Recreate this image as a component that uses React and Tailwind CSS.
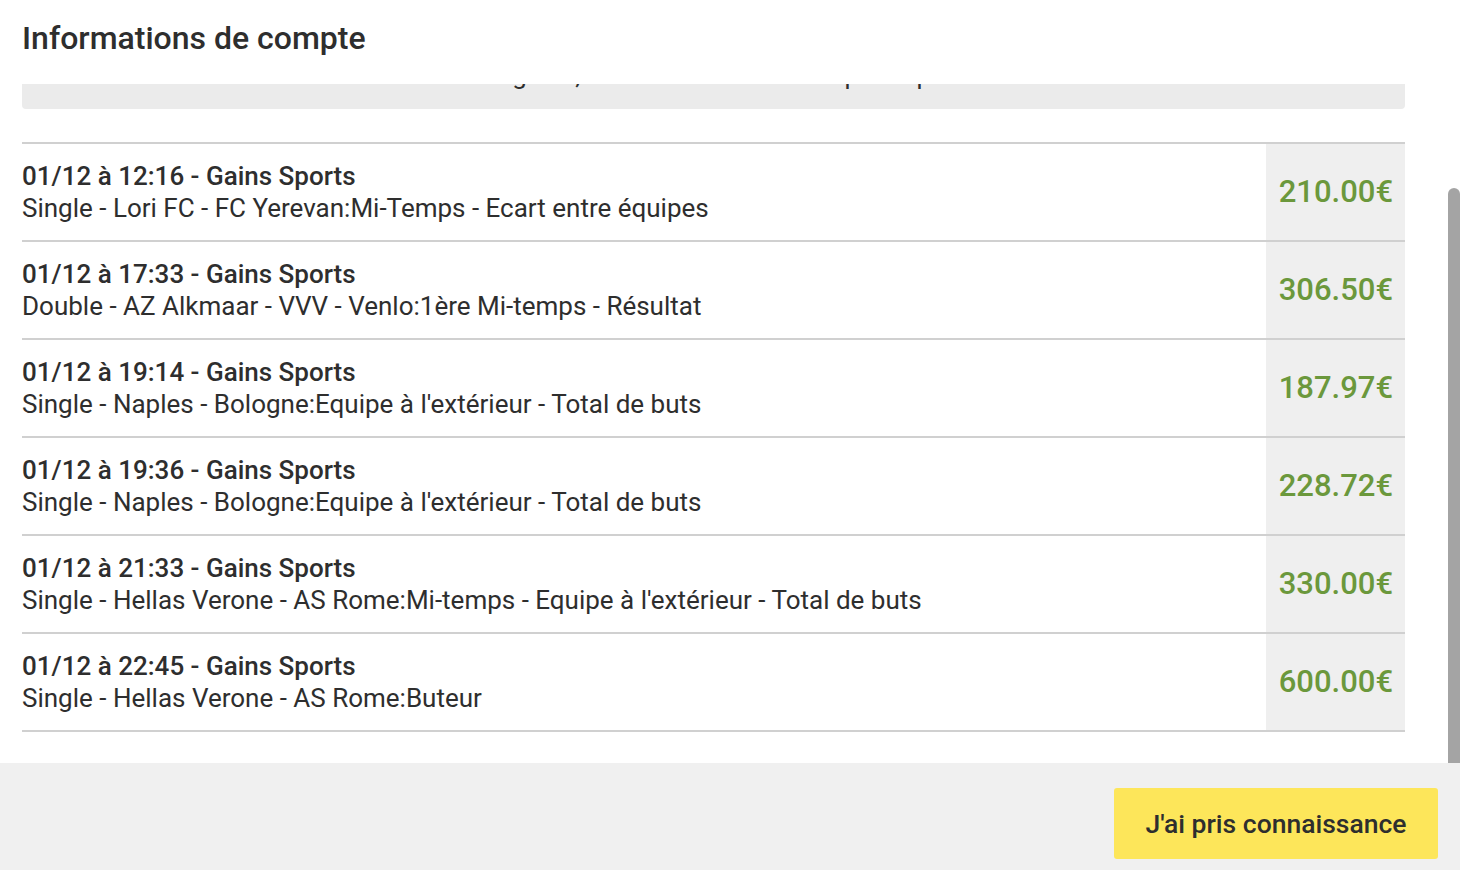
const rows = [
  { title: '01/12 à 12:16 - Gains Sports', detail: 'Single - Lori FC - FC Yerevan:Mi-Temps - Ecart entre équipes', amount: '210.00€' },
  { title: '01/12 à 17:33 - Gains Sports', detail: 'Double - AZ Alkmaar - VVV - Venlo:1ère Mi-temps - Résultat', amount: '306.50€' },
  { title: '01/12 à 19:14 - Gains Sports', detail: "Single - Naples - Bologne:Equipe à l'extérieur - Total de buts", amount: '187.97€' },
  { title: '01/12 à 19:36 - Gains Sports', detail: "Single - Naples - Bologne:Equipe à l'extérieur - Total de buts", amount: '228.72€' },
  { title: '01/12 à 21:33 - Gains Sports', detail: "Single - Hellas Verone - AS Rome:Mi-temps - Equipe à l'extérieur - Total de buts", amount: '330.00€' },
  { title: '01/12 à 22:45 - Gains Sports', detail: 'Single - Hellas Verone - AS Rome:Buteur', amount: '600.00€' },
];

export default function App() {
  return (
    <div className="h-[870px] w-[1460px] flex flex-col bg-white text-[#2e2e2e] font-['Roboto','Liberation_Sans',sans-serif] overflow-hidden">
      {/* Header */}
      <div className="h-[84px] shrink-0 px-[22px] pt-[18px]">
        <h1 className="text-[32px] font-medium leading-[40px]">Informations de compte</h1>
      </div>

      {/* Scrolled content */}
      <div className="relative flex-1 overflow-hidden">
        <div className="pl-[22px] pr-[55px]">
          <div className="-mt-[25px] bg-[#ebebeb] rounded-b-[4px] px-4 pb-[18px] text-[26px] leading-[32px] whitespace-nowrap overflow-hidden">
            Vous trouverez ci-dessous la liste de vos gains, crédités sur votre compte depuis votre dernière connexion.
          </div>

          <div className="mt-[33px] border-t-2 border-[#d0d0d0]">
            {rows.map((row, idx) => (
              <div key={idx} className="flex h-[98px] border-b-2 border-[#d0d0d0]">
                <div className="flex-1 flex flex-col justify-center text-[26px] leading-[32px]">
                  <p className="font-medium">{row.title}</p>
                  <p>{row.detail}</p>
                </div>
                <div className="w-[139px] bg-[#efefef] flex items-center justify-end pr-3 text-[31px] font-medium text-[#6b983c]">
                  {row.amount}
                </div>
              </div>
            ))}
          </div>
        </div>

        {/* scrollbar thumb */}
        <div className="absolute right-0 top-[104px] bottom-0 w-[12px] bg-[#a4a4a4] rounded-t-[6px]" />
      </div>

      {/* Footer */}
      <div className="h-[107px] shrink-0 bg-[#f0f0f0] flex items-start justify-end pt-[25px] pr-[22px]">
        <button className="h-[71px] w-[324px] bg-[#fde65a] rounded-[3px] text-[26.5px] font-medium text-[#2e2e2e]">
          J'ai pris connaissance
        </button>
      </div>
    </div>
  );
}
